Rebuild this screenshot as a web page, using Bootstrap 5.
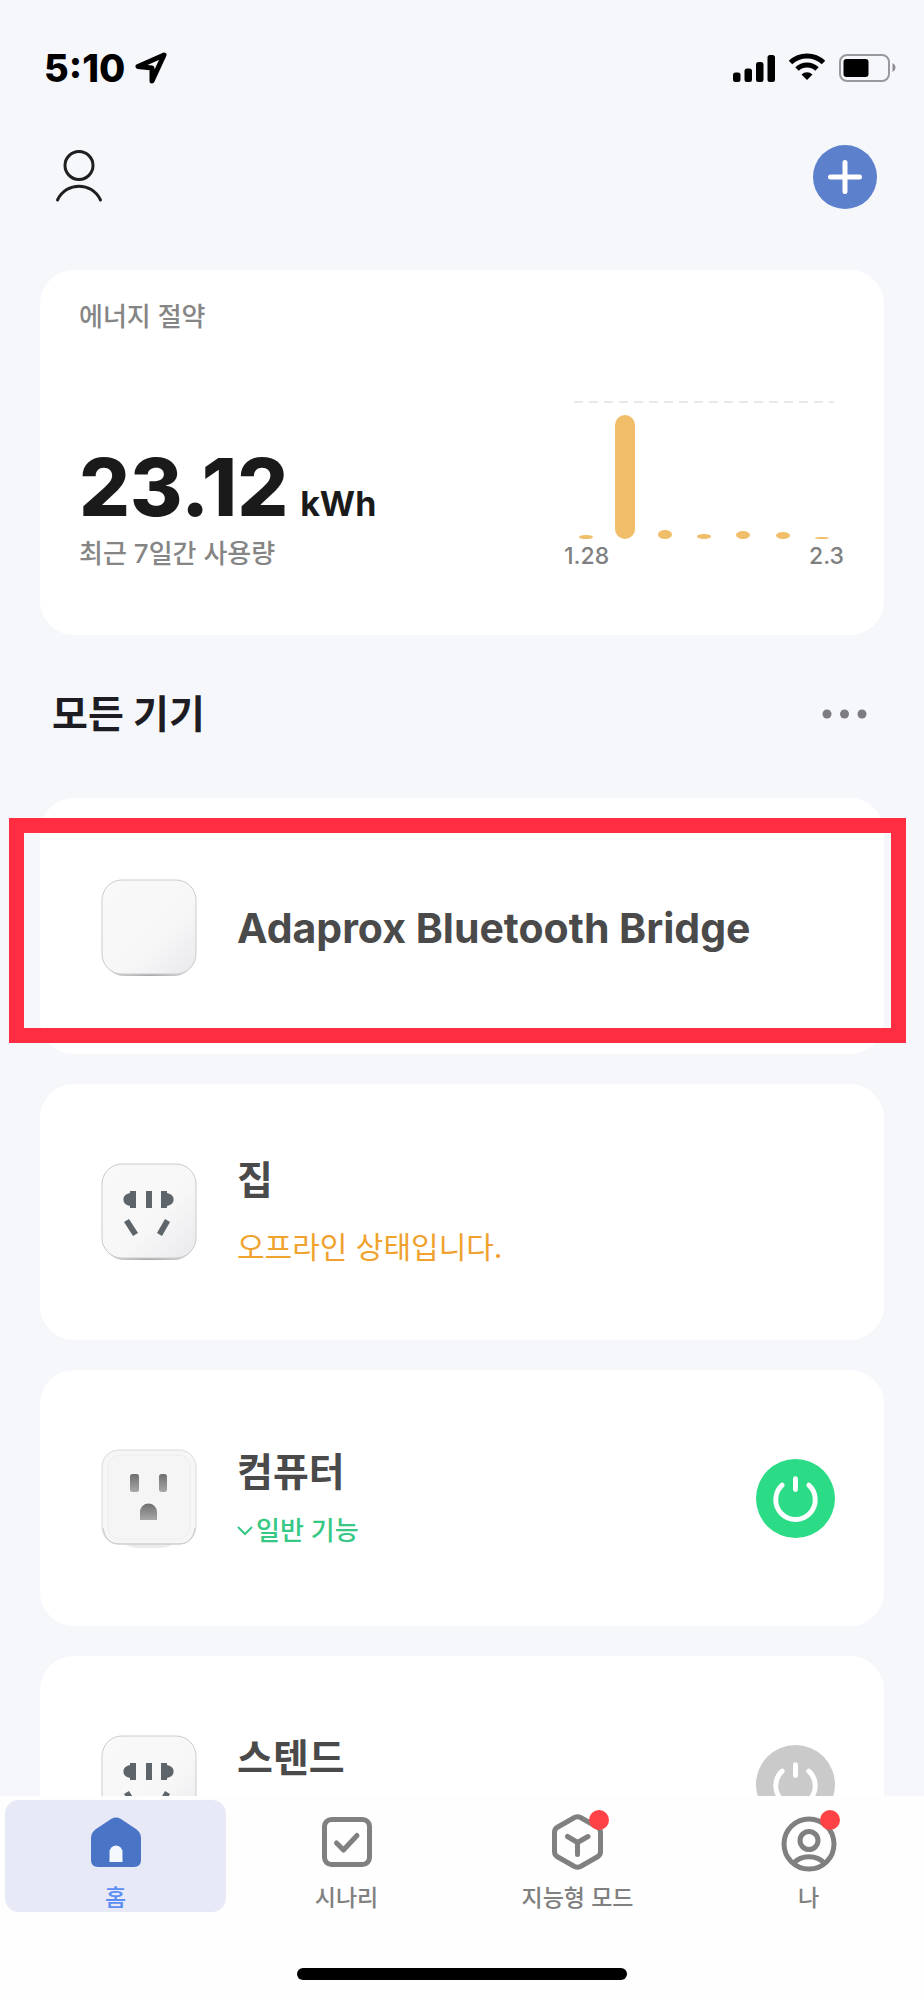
<!DOCTYPE html>
<html lang="ko">
<head>
<meta charset="utf-8">
<meta name="viewport" content="width=device-width, initial-scale=1">
<title>모든 기기</title>
<link href="https://cdn.jsdelivr.net/npm/bootstrap@5.3.0/dist/css/bootstrap.min.css" rel="stylesheet">
<style>
  body { background: #f5f7fb; color: #1a1a1a; font-family: Inter, "Noto Sans CJK KR", sans-serif; }
  svg { display: block; flex: none; overflow: visible; }
  .screen-body { min-height: 0; }
  .status-bar { padding: 46px 28px 0 44px; color: #000; font-size: 38px; line-height: 44px; font-weight: 800; }
  .top-bar { padding: 54px 47px 0 52px; height: 119px; }
  .btn-add { width: 64px; height: 64px; background: #5c80cc; }
  .page-pad { padding: 0 40px; }
  .panel { border-radius: 34px; background: #fff; border: 0; }
  .energy { margin-top: 61px; height: 365px; padding: 29px 42px 0 39px; }
  .caption-text { font-size: 26px; line-height: 36px; color: #858585; font-weight: 500; }
  .total { font-size: 80px; line-height: 64px; font-weight: 800; }
  .unit { font-size: 34px; font-weight: 700; margin-left: 12px; }
  .chart { width: 276px; padding-top: 2px; }
  .chart-plot { height: 138px; background: repeating-linear-gradient(90deg, #e9e9e9 0 9px, transparent 9px 15px) 8px 0 / 260px 2px no-repeat; }
  .chart-plot > div { flex: 1 1 0; }
  .bar { background: #f0bd68; border-radius: 50%; width: 14px; }
  .bar-tall { border-radius: 10px; width: 20px; }
  .axis { font-size: 23px; line-height: 28px; color: #7f7f7f; font-weight: 500; padding-top: 3px; margin: 0 -2px; }
  .section-head { padding: 51px 16px 56px 12px; }
  .section-head h1 { font-size: 39px; line-height: 56px; font-weight: 700; color: #1d1c22; }
  .devices { gap: 30px; }
  .device { height: 256px; padding: 0 49px 0 60px; gap: 39px; }
  .device h2 { font-size: 39px; line-height: 50px; font-weight: 700; color: #4a4a4a; }
  .device .latin { font-size: 41px; }
  .offline { font-size: 30px; line-height: 44px; color: #f0a22e; margin-top: 20px; }
  .func { font-size: 26px; line-height: 36px; color: #36c884; margin-top: 16px; font-weight: 500; gap: 3px; }
  .btn-power { width: 79px; height: 79px; background: #2bdb86; }
  .btn-power.is-off { background: #cacaca; }
  .highlight { inset: 20px -22px 11px -31px; border: 15px solid #ff2d42; pointer-events: none; }
  .tab-bar { background: #fefefe; z-index: 2; }
  .tab { margin: 4px 5px; height: 112px; border-radius: 14px; padding-top: 17px; color: #808080; font-size: 23px; line-height: 30px; font-weight: 500; gap: 12px; }
  .tab.active { background: #e7eaf6; color: #5b8df5; }
  .dot { width: 20px; height: 20px; top: -7px; right: -3px; background: #ff4245; }
  .home-line { width: 330px; height: 12px; border-radius: 6px; background: #000; margin: 52px auto 20px; }
</style>
</head>
<body>
<svg width="0" height="0" class="position-absolute" aria-hidden="true">
  <defs>
    <linearGradient id="shell" x1="0" y1="0" x2="1" y2="1"><stop offset="0" stop-color="#f9f9f9"/><stop offset=".6" stop-color="#f7f7f8"/><stop offset="1" stop-color="#e9e9ec"/></linearGradient>
    <linearGradient id="edge" x1="0" y1="0" x2="1" y2="0"><stop offset="0" stop-color="#ddd"/><stop offset=".5" stop-color="#a8a8ac"/><stop offset="1" stop-color="#ddd"/></linearGradient>
    <linearGradient id="slot" x1="0" y1="0" x2="0" y2="1"><stop offset="0" stop-color="#6f6f6f"/><stop offset="1" stop-color="#a8a8a8"/></linearGradient>
    <symbol id="plate" viewBox="0 0 98 100"><rect x="3" y="6" width="92" height="92" rx="21" fill="url(#edge)"/><rect x="2" y="2" width="94" height="94" rx="20" fill="url(#shell)" stroke="#cbcbcd"/></symbol>
    <symbol id="socket-cn" viewBox="0 0 98 100"><use href="#plate"/>
      <g fill="#5d646a"><path d="M30 29h6v17h-6v-2l-3-1a6 6 0 0 1 0-11l3-1zM46 29h6v17h-6zM61 29h6v2l3 1a6 6 0 0 1 0 11l-3 1v2h-6z"/><path d="M24 60l5-3 9 14-5 3zM70 60l-5-3-8 14 5 3z"/></g></symbol>
    <symbol id="power" viewBox="0 0 80 80"><path d="M26.500 26.500a20 20 0 1 0 27 0M40 20v11" fill="none" stroke="#fff" stroke-width="5" stroke-linecap="round"/></symbol>
  </defs>
</svg>

<div class="vh-100 d-flex flex-column overflow-hidden">
  <div class="screen-body flex-grow-1 overflow-hidden">
    <div class="status-bar d-flex align-items-center justify-content-between">
      <div class="d-flex align-items-center">
        <span>5:10</span>
        <svg class="ms-2" width="34" height="34" viewBox="0 0 34 34" fill="none" stroke="#000" stroke-width="5" stroke-linejoin="round"><path d="M31 4L5 15.500l14 1.500v13z"/></svg>
      </div>
      <div class="d-flex align-items-center">
        <svg width="42" height="27" viewBox="0 0 42 27"><rect y="17.500" width="7.500" height="9.500" rx="2.500"/><rect x="11.500" y="13.500" width="7.500" height="13.500" rx="2.500"/><rect x="23" y="7" width="7.500" height="20" rx="2.500"/><rect x="34.500" width="7.500" height="27" rx="2.500"/></svg>
        <svg class="ms-3 me-2" width="36" height="28" viewBox="2 1 36 28" fill="none" stroke="#000" stroke-width="5"><path d="M1.500 9.500a24 24 0 0 1 33 0M8 16a14.500 14.500 0 0 1 20 0"/><path d="M12.500 21.500a8 8 0 0 1 11 0L18 27z" fill="#000" stroke="none"/></svg>
        <svg class="ms-1" width="57" height="28" viewBox="0 0 57 28"><rect x="1" y="1" width="49" height="26" rx="7" fill="none" stroke="#99999d" stroke-width="2"/><rect x="4.500" y="5" width="25" height="18" rx="3"/><path d="M53.500 9c4 2 4 7 0 9z" fill="#8c8c90"/></svg>
      </div>
    </div>

    <header class="top-bar d-flex align-items-center justify-content-between">
      <button class="btn p-0 border-0" aria-label="프로필"><svg width="54" height="56" viewBox="0 0 54 56" fill="none" stroke="#1f1f1f" stroke-width="3" stroke-linecap="round"><circle cx="27" cy="16.500" r="14"/><path d="M5.500 51c9-18.500 34-18.500 43 0"/></svg></button>
      <button class="btn btn-add rounded-circle p-0 border-0" aria-label="추가"><svg width="64" height="64" viewBox="0 0 64 64" stroke="#fff" stroke-width="5" stroke-linecap="round"><path d="M32 17.500v29M17.500 32h29"/></svg></button>
    </header>

    <main class="page-pad">
      <section class="panel energy">
        <div class="caption-text">에너지 절약</div>
        <div class="d-flex justify-content-between mt-5 pt-3">
          <div class="mt-5 pt-2">
            <div class="total">23.12<span class="unit">kWh</span></div>
            <div class="caption-text">최근 7일간 사용량</div>
          </div>
          <div class="chart">
            <div class="chart-plot d-flex align-items-end">
              <div class="d-flex justify-content-center"><div class="bar" style="height:4px"></div></div>
              <div class="d-flex justify-content-center"><div class="bar bar-tall" style="height:124px"></div></div>
              <div class="d-flex justify-content-center"><div class="bar" style="height:9px"></div></div>
              <div class="d-flex justify-content-center"><div class="bar" style="height:5px"></div></div>
              <div class="d-flex justify-content-center"><div class="bar" style="height:8px"></div></div>
              <div class="d-flex justify-content-center"><div class="bar" style="height:7px"></div></div>
              <div class="d-flex justify-content-center"><div class="bar" style="height:2px"></div></div>
            </div>
            <div class="axis d-flex justify-content-between"><span>1.28</span><span>2.3</span></div>
          </div>
        </div>
      </section>

      <div class="section-head d-flex align-items-center justify-content-between">
        <h1 class="m-0">모든 기기</h1>
        <button class="btn p-0 border-0" aria-label="더 보기"><svg width="50" height="20" viewBox="0 0 50 20" fill="#7c7c81"><circle cx="9" cy="10" r="4.500"/><circle cx="26.500" cy="10" r="4.500"/><circle cx="44" cy="10" r="4.500"/></svg></button>
      </div>

      <div class="devices d-flex flex-column">
        <article class="panel device position-relative d-flex align-items-center pt-1">
          <svg width="98" height="100"><use href="#plate"/></svg>
          <h2 class="latin m-0">Adaprox Bluetooth Bridge</h2>
          <div class="highlight position-absolute"></div>
        </article>

        <article class="panel device d-flex align-items-center">
          <svg width="98" height="100"><use href="#socket-cn"/></svg>
          <div><h2 class="m-0">집</h2><div class="offline">오프라인 상태입니다.</div></div>
        </article>

        <article class="panel device d-flex align-items-center">
          <svg width="98" height="100" viewBox="0 0 98 100"><rect x="14" y="22" width="70" height="78" rx="24" fill="#ebebeb"/><rect x="2" y="2" width="94" height="94" rx="17" fill="#f6f6f6" stroke="#dadada"/><path d="M3 80c2 11 7 16 16 16h60c9 0 14-5 16-16" fill="none" stroke="#c9c9c9"/><rect x="8" y="7" width="82" height="84" rx="12" fill="#f5f5f5" stroke="#eee"/><rect x="30" y="26" width="9" height="18" rx="2.500" fill="url(#slot)"/><rect x="59" y="26" width="8" height="18" rx="2.500" fill="url(#slot)"/><path d="M40 72V64a8.500 8.500 0 0 1 17 0v8z" fill="url(#slot)"/></svg>
          <div class="flex-grow-1"><h2 class="m-0">컴퓨터</h2>
            <button class="func btn p-0 border-0 d-flex align-items-center"><svg width="16" height="12" viewBox="0 0 16 12" fill="none" stroke="#36c884" stroke-width="2" stroke-linecap="round"><path d="M1.500 2.500L8 9l6.500-6.500"/></svg>일반 기능</button></div>
          <button class="btn btn-power rounded-circle p-0 border-0" aria-label="컴퓨터 전원"><svg width="79" height="79"><use href="#power"/></svg></button>
        </article>

        <article class="panel device d-flex align-items-center">
          <svg width="98" height="100"><use href="#socket-cn"/></svg>
          <h2 class="flex-grow-1 mt-0 mb-5 pb-1">스텐드</h2>
          <button class="btn btn-power is-off rounded-circle p-0 border-0" aria-label="스텐드 전원"><svg width="79" height="79"><use href="#power"/></svg></button>
        </article>
      </div>
    </main>
  </div>

  <footer class="tab-bar flex-shrink-0">
    <nav class="row row-cols-4 g-0">
      <div class="col"><a href="#" class="tab active d-flex flex-column align-items-center text-decoration-none" aria-current="page">
        <svg width="56" height="54" viewBox="0 0 56 54"><path fill="#4a74c6" d="M23.500 1.800q4.500-2.600 9 0L48 12q5 3.500 5 9v22q0 7-7 7H10q-7 0-7-7V21q0-5.500 5-9z"/><path fill="#f4f8ff" d="M21.500 45V35a6.500 6.500 0 0 1 13 0v10z"/></svg>홈</a></div>
      <div class="col"><a href="#" class="tab d-flex flex-column align-items-center text-decoration-none">
        <svg width="56" height="54" viewBox="0 0 56 54" fill="none" stroke="#808080" stroke-width="5" stroke-linecap="round" stroke-linejoin="round"><rect x="5.500" y="2.500" width="45" height="45" rx="7"/><path d="M17.500 26l7 7L38 18.500"/></svg>시나리</a></div>
      <div class="col"><a href="#" class="tab d-flex flex-column align-items-center text-decoration-none">
        <span class="position-relative"><svg width="56" height="54" viewBox="0 0 56 54" fill="none" stroke="#808080" stroke-width="5" stroke-linecap="round" stroke-linejoin="round"><path d="M24.500 .5q3-1.500 6 0L48 10.500q2.500 1.500 2.500 5v19q0 3.500-2.500 5L30.500 49.500q-3 1.500-6 0L7 39.500q-2.500-1.500-2.500-5v-19q0-3.500 2.500-5z"/><path d="M17.500 19.500L27.500 25.500l10.500-6M27.500 25.500v12"/></svg><span class="dot position-absolute rounded-circle"></span></span>지능형 모드</a></div>
      <div class="col"><a href="#" class="tab d-flex flex-column align-items-center text-decoration-none">
        <span class="position-relative"><svg width="56" height="54" viewBox="0 0 56 54" fill="none" stroke="#808080" stroke-width="5"><circle cx="28" cy="27" r="25"/><circle cx="28" cy="23.500" r="9"/><path d="M12.500 46c8-8.500 23-8.500 31 0"/></svg><span class="dot position-absolute rounded-circle"></span></span>나</a></div>
    </nav>
    <div class="home-line"></div>
  </footer>
</div>
<script src="https://cdn.jsdelivr.net/npm/bootstrap@5.3.0/dist/js/bootstrap.bundle.min.js"></script>
</body>
</html>
